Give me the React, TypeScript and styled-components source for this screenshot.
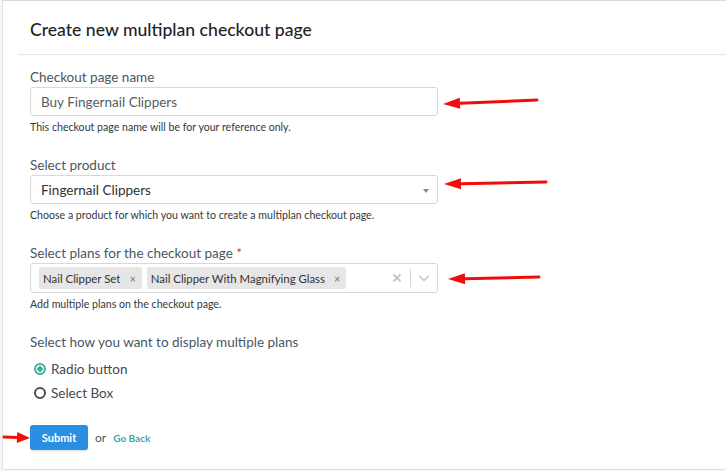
import React from "react";
import styled, { createGlobalStyle } from "styled-components";

const GlobalStyle = createGlobalStyle`
  html, body {
    margin: 0;
    padding: 0;
    background: #f4f6f8;
    overflow: hidden;
  }
  body {
    font-family: Lato, "Open Sans", Arial, sans-serif;
  }
`;

const plans = ["Nail Clipper Set", "Nail Clipper With Magnifying Glass"];

const Arrow: React.FC<{ tail: [number, number]; tip: [number, number]; head?: number }> = ({
  tail,
  tip,
  head = 17,
}) => {
  const dx = tail[0] - tip[0];
  const dy = tail[1] - tip[1];
  const len = Math.hypot(dx, dy);
  const ux = dx / len;
  const uy = dy / len;
  const bx = tip[0] + ux * head;
  const by = tip[1] + uy * head;
  const w = 5.5;
  const p1 = `${bx - uy * w},${by + ux * w}`;
  const p2 = `${bx + uy * w},${by - ux * w}`;
  return (
    <g>
      <line x1={tail[0]} y1={tail[1]} x2={bx} y2={by} stroke="#f20d0d" strokeWidth={3} strokeLinecap="round" />
      <polygon points={`${tip[0]},${tip[1]} ${p1} ${p2}`} fill="#f20d0d" />
    </g>
  );
};

const App: React.FC = () => {
  return (
    <Page>
      <GlobalStyle />
      <Card>
        <Header>
          <Title>Create new multiplan checkout page</Title>
        </Header>
        <Body>
          <Group>
            <Label>Checkout page name</Label>
            <Input>Buy Fingernail Clippers</Input>
            <Help>This checkout page name will be for your reference only.</Help>
          </Group>

          <Group>
            <Label>Select product</Label>
            <Select>
              <SelectValue>Fingernail Clippers</SelectValue>
              <Caret />
            </Select>
            <Help>Choose a product for which you want to create a multiplan checkout page.</Help>
          </Group>

          <Group>
            <Label>
              Select plans for the checkout page <Required>*</Required>
            </Label>
            <Multi>
              <Tags>
                {plans.map((p) => (
                  <Tag key={p}>
                    {p}
                    <TagRemove>×</TagRemove>
                  </Tag>
                ))}
              </Tags>
              <Indicators>
                <svg width="14" height="14" viewBox="0 0 14 14">
                  <path d="M3.5 3.5 L10.5 10.5 M10.5 3.5 L3.5 10.5" stroke="#c4c4c4" strokeWidth="1.8" />
                </svg>
                <IndicatorSep />
                <svg width="14" height="14" viewBox="0 0 14 14">
                  <path d="M2.5 5 L7 9.5 L11.5 5" stroke="#c4c4c4" strokeWidth="1.5" fill="none" />
                </svg>
              </Indicators>
            </Multi>
            <Help>Add multiple plans on the checkout page.</Help>
          </Group>

          <Group>
            <Label>Select how you want to display multiple plans</Label>
            <Options>
              <Option>
                <Radio checked />
                Radio button
              </Option>
              <Option>
                <Radio />
                Select Box
              </Option>
            </Options>
          </Group>

          <Actions>
            <SubmitButton>Submit</SubmitButton>
            <Or>or</Or>
            <BackLink>Go Back</BackLink>
          </Actions>
        </Body>
      </Card>

      <Annotations width="726" height="471" viewBox="0 0 726 471">
        <Arrow tail={[537, 100]} tip={[443, 104]} />
        <Arrow tail={[546, 182]} tip={[444, 184]} />
        <Arrow tail={[539, 277]} tip={[448, 279]} />
        <Arrow tail={[4, 437]} tip={[30, 438]} head={13} />
      </Annotations>
    </Page>
  );
};

export default App;

/** ============================= styled-components ============================= */

const Page = styled.div`
  position: relative;
  width: 726px;
  height: 471px;
  overflow: hidden;
`;

const Card = styled.div`
  margin-left: 2px;
  width: 760px;
  background: #ffffff;
  border: 1px solid #dde2e7;
  border-top-color: #d5dbe1;
  box-sizing: border-box;
`;

const Header = styled.div`
  margin-left: 15px;
  padding-left: 12px;
  height: 53px;
  display: flex;
  align-items: center;
  border-bottom: 1px solid #e3e6e9;
`;

const Title = styled.h1`
  margin: 0;
  padding-top: 4px;
  font-size: 17.6px;
  font-weight: 500;
  color: #1f2326;
`;

const Body = styled.div`
  padding: 14px 0 19px 27px;
`;

const Group = styled.div`
  width: 408px;
  margin-bottom: 23px;
`;

const Label = styled.div`
  font-size: 13.5px;
  line-height: 16px;
  color: #4a5662;
  margin-bottom: 2px;
`;

const Required = styled.span`
  color: #e0342f;
`;

const fieldBox = `
  box-sizing: border-box;
  border: 1px solid #d8d8d8;
  border-radius: 3px;
  background: #fff;
  display: flex;
  align-items: center;
`;

const Input = styled.div`
  ${fieldBox};
  height: 29px;
  padding: 0 10px;
  font-size: 13.5px;
  color: #555d64;
`;

const Select = styled.div`
  ${fieldBox};
  height: 29px;
  padding: 0 8px 0 10px;
  justify-content: space-between;
`;

const SelectValue = styled.span`
  font-size: 13.5px;
  color: #2c3236;
`;

const Caret = styled.span`
  width: 0;
  height: 0;
  border-left: 3.5px solid transparent;
  border-right: 3.5px solid transparent;
  border-top: 4px solid #888;
  margin-top: 2px;
`;

const Help = styled.div`
  margin-top: 4px;
  font-size: 10.6px;
  line-height: 14px;
  color: #33383d;
`;

const Multi = styled.div`
  ${fieldBox};
  height: 30px;
  padding: 0 6px 0 8px;
  justify-content: space-between;
`;

const Tags = styled.div`
  display: flex;
  gap: 5px;
`;

const Tag = styled.span`
  display: inline-flex;
  align-items: center;
  height: 22px;
  padding: 0 6px 0 4px;
  background: #e6e6e6;
  border-radius: 2px;
  font-size: 11.4px;
  color: #333;
`;

const TagRemove = styled.span`
  margin-left: 9px;
  font-size: 11px;
  color: #777;
`;

const Indicators = styled.div`
  display: flex;
  align-items: center;
  gap: 6px;
`;

const IndicatorSep = styled.span`
  width: 1px;
  height: 18px;
  background: #d6d6d6;
`;

const Options = styled.div`
  display: flex;
  flex-direction: column;
  gap: 6px;
  margin-top: 10px;
`;

const Option = styled.label`
  display: flex;
  align-items: center;
  gap: 5px;
  height: 18px;
  padding-left: 4px;
  font-size: 13.5px;
  color: #434a50;
`;

const Radio = styled.span<{ checked?: boolean }>`
  box-sizing: border-box;
  width: 12px;
  height: 12px;
  border-radius: 50%;
  border: 2px solid ${(p) => (p.checked ? "#3fae9c" : "#4b4f53")};
  background: ${(p) => (p.checked ? "radial-gradient(circle, #3fae9c 0 2.5px, #fff 3px)" : "#fff")};
`;

const Actions = styled.div`
  display: flex;
  align-items: center;
  margin-top: 0;
`;

const SubmitButton = styled.button`
  width: 58px;
  height: 25px;
  border: none;
  border-radius: 3px;
  background: #2a8ee3;
  color: #fff;
  font-family: inherit;
  font-size: 11px;
  font-weight: 700;
  box-shadow: 0 1px 2px rgba(0, 0, 0, 0.15);
  cursor: pointer;
`;

const Or = styled.span`
  margin-left: 7px;
  font-size: 12px;
  color: #555;
`;

const BackLink = styled.a`
  margin-left: 7px;
  font-size: 10px;
  font-weight: 700;
  color: #3aa9a6;
  cursor: pointer;
`;

const Annotations = styled.svg`
  position: absolute;
  top: 0;
  left: 0;
  pointer-events: none;
`;
